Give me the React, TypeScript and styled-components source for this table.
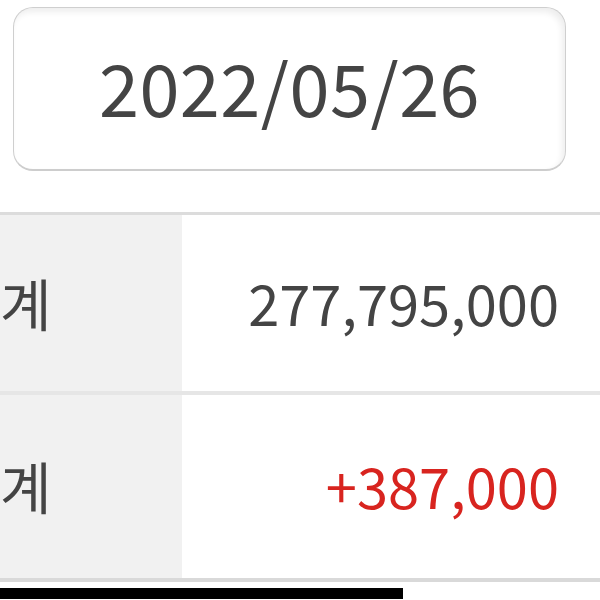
import React from "react";
import styled, { createGlobalStyle } from "styled-components";

const Global = createGlobalStyle`
  html, body { margin: 0; padding: 0; background: #fff; }
  body { font-family: "Noto Sans CJK KR", "Noto Sans", sans-serif; }
`;

const Page = styled.div`
  width: 600px;
  height: 600px;
  overflow: hidden;
  display: flex;
  flex-direction: column;
`;

const DateBar = styled.div`
  padding: 7px 34px 0 13px;
`;

const DateBox = styled.div`
  height: 164px;
  box-sizing: border-box;
  padding-bottom: 6px;
  border: 1px solid #cfcfcf;
  border-bottom: 2px solid #cdcdcd;
  border-radius: 20px;
  box-shadow: inset -3px 4px 6px rgba(0, 0, 0, 0.07);
  display: flex;
  align-items: center;
  justify-content: center;
  font-size: 72px;
  color: #444;
  letter-spacing: 0.5px;
`;

const Table = styled.div`
  margin-top: 41px;
  border-top: 3px solid #dcdcdc;
  border-bottom: 4px solid #d9d9d9;
  display: flex;
  flex-direction: column;
`;

const Row = styled.div<{ $h: number; $divider?: boolean }>`
  display: grid;
  grid-template-columns: 182px 1fr;
  height: ${(p) => p.$h}px;
  border-bottom: ${(p) => (p.$divider ? "4px solid #e6e6e6" : "none")};
`;

const Label = styled.div`
  background: #f1f1f1;
  display: flex;
  align-items: center;
  padding-bottom: 4px;
  font-size: 56px;
  color: #444;
`;

const Value = styled.div<{ $red?: boolean }>`
  display: flex;
  align-items: center;
  justify-content: flex-end;
  padding-right: 41px;
  padding-bottom: 4px;
  font-size: 56px;
  color: ${(p) => (p.$red ? "#d8241f" : "#444")};
`;

const BottomBar = styled.div`
  margin-top: 6px;
  width: 403px;
  height: 11px;
  background: #000;
`;

export default function App() {
  return (
    <>
      <Global />
      <Page>
        <DateBar>
          <DateBox>2022/05/26</DateBox>
        </DateBar>
        <Table>
          <Row $h={176} $divider>
            <Label>계</Label>
            <Value>277,795,000</Value>
          </Row>
          <Row $h={183}>
            <Label>계</Label>
            <Value $red>+387,000</Value>
          </Row>
        </Table>
        <BottomBar />
      </Page>
    </>
  );
}
